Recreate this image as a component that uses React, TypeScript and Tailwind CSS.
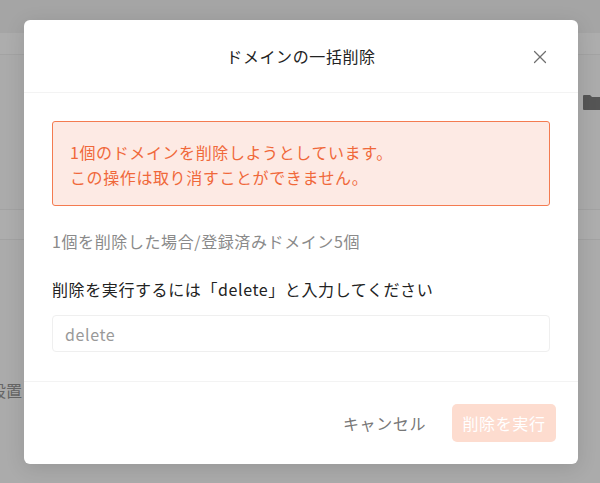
import React, { useState } from 'react';
import { X } from 'lucide-react';

const font = { fontFamily: '"Noto Sans CJK JP", "Noto Sans", sans-serif' };

const BulkDeleteModal: React.FC = () => {
  const [value, setValue] = useState('');
  const ready = value === 'delete';

  return (
    <div className="absolute left-[24px] top-[20px] flex w-[554px] flex-col rounded-md bg-white tracking-[0.6px] shadow-[0_4px_20px_rgba(0,0,0,0.12)]">
      <div className="relative flex h-[73px] items-center justify-center border-b border-[#f3f3f3]">
        <h2 className="text-[16px] leading-6 text-[#222]">ドメインの一括削除</h2>
        <button className="absolute right-[27px] top-[26px] text-[#6f6f6f]">
          <X size={22} strokeWidth={1.3} />
        </button>
      </div>

      <div className="px-[28px] pt-[28px] pb-[29px]">
        <div className="rounded-[3px] border border-[#f47b50] bg-[#fdeae4] pl-[17px] pr-4 pt-[18px] pb-[15px] text-[16px] leading-[25px] text-[#f0683a]">
          <p>1個のドメインを削除しようとしています。</p>
          <p>この操作は取り消すことができません。</p>
        </div>

        <p className="mt-[23px] text-[16px] leading-6 text-[#8a8a8a]">
          1個を削除した場合/登録済みドメイン5個
        </p>

        <p className="mt-[24px] text-[16px] leading-6 text-[#222]">
          削除を実行するには「delete」と入力してください
        </p>

        <input
          value={value}
          onChange={e => setValue(e.target.value)}
          placeholder="delete"
          className="mt-[14px] h-[37px] w-full rounded-[4px] border border-[#efefef] px-[12px] text-[16px] tracking-[0.6px] text-[#333] outline-none placeholder:text-[#999]"
          style={font}
        />
      </div>

      <div className="flex h-[83px] items-center justify-end gap-[26px] border-t border-[#f3f3f3] pr-[22px]">
        <button className="text-[16px] leading-6 tracking-[0.6px] text-[#777]" style={font}>
          キャンセル
        </button>
        <button
          disabled={!ready}
          className={`h-[38px] w-[104px] rounded-[5px] text-[16px] leading-6 tracking-[0.6px] text-white ${
            ready ? 'bg-[#f47b50]' : 'bg-[#fddccf]'
          }`}
          style={font}
        >
          削除を実行
        </button>
      </div>
    </div>
  );
};

export default function App() {
  return (
    <div className="relative h-[483px] w-[600px] overflow-hidden bg-[#ababab]" style={font}>
      {/* page behind the overlay */}
      <div className="h-[33px] bg-[#a5a5a5]" />
      <div className="h-[22px] border-b border-[#a3a3a3] bg-[#adadad]" />
      <div className="flex h-[155px] justify-end border-b border-[#a2a2a2] pt-[38px]">
        <svg width="20" height="18" viewBox="0 0 20 18" className="mr-[-2px]">
          <path d="M2 2h6l2 2h10v12a1 1 0 0 1-1 1H2a1 1 0 0 1-1-1V3a1 1 0 0 1 1-1z" fill="#555" />
        </svg>
      </div>
      <div className="h-[30px] border-b border-[#a2a2a2] bg-[#adadad]" />
      <div className="ml-[-10px] mt-[138px] text-[16px] leading-6 text-[#666]">設置さ</div>

      <BulkDeleteModal />
    </div>
  );
}
